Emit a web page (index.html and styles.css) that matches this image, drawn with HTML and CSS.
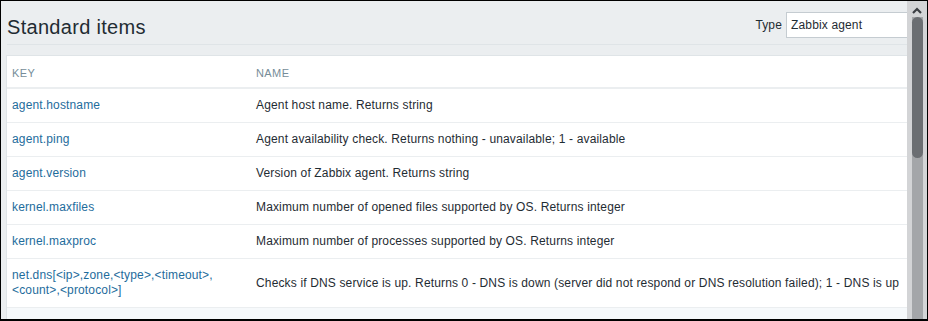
FILE: index.html
```html
<!DOCTYPE html>
<html>
<head>
<meta charset="utf-8">
<link rel="stylesheet" href="styles.css">
</head>
<body>
<div class="frame">
  <div class="page">
    <div class="header">
      <h1 class="title">Standard items</h1>
      <div class="filter">
        <span class="filter-label">Type</span>
        <div class="select">Zabbix agent</div>
      </div>
    </div>
    <div class="box">
      <table class="items">
        <thead>
          <tr><th class="col-key">Key</th><th>Name</th></tr>
        </thead>
        <tbody>
          <tr><td><a class="link">agent.hostname</a></td><td>Agent host name. Returns string</td></tr>
          <tr><td><a class="link">agent.ping</a></td><td>Agent availability check. Returns nothing - unavailable; 1 - available</td></tr>
          <tr><td><a class="link">agent.version</a></td><td>Version of Zabbix agent. Returns string</td></tr>
          <tr><td><a class="link">kernel.maxfiles</a></td><td>Maximum number of opened files supported by OS. Returns integer</td></tr>
          <tr><td><a class="link">kernel.maxproc</a></td><td>Maximum number of processes supported by OS. Returns integer</td></tr>
          <tr><td><a class="link">net.dns[&lt;ip&gt;,zone,&lt;type&gt;,&lt;timeout&gt;,<br>&lt;count&gt;,&lt;protocol&gt;]</a></td><td>Checks if DNS service is up. Returns 0 - DNS is down (server did not respond or DNS resolution failed); 1 - DNS is up</td></tr>
          <tr class="hover"><td>&nbsp;</td><td>&nbsp;</td></tr>
        </tbody>
      </table>
    </div>
  </div>
  <div class="scrollbar">
    <svg class="arrow" width="20" height="14" viewBox="0 0 20 14"><polyline points="6,10 10,6 14,10" fill="none" stroke="#3c3f44" stroke-width="2.2"/></svg>
    <div class="track">
      <div class="thumb"></div>
    </div>
  </div>
</div>
</body>
</html>
```

FILE: styles.css
```css
* { box-sizing: border-box; }
html, body { margin: 0; padding: 0; background: #000; }
body { font-family: "Liberation Sans", Arial, sans-serif; color: #1f2c33; }

.frame {
  width: 928px;
  height: 321px;
  border: 1px solid #000;
  border-bottom-width: 2px;
  display: flex;
  overflow: hidden;
  background: #ebeef0;
}

.page {
  flex: 1;
  min-width: 0;
  padding-left: 5px;
  overflow: hidden;
  background: #ebeef0;
}

.header {
  display: flex;
  justify-content: space-between;
  align-items: flex-start;
  width: 920px;
  border-bottom: 1px solid #dfe4e7;
  height: 44px;
  margin-left: 1px;
}

.title {
  margin: 14px 0 0 0;
  font-size: 20px;
  line-height: 24px;
  font-weight: normal;
  letter-spacing: 0.3px;
  color: #1f2c33;
}

.filter {
  display: flex;
  align-items: center;
  margin-top: 11px;
  gap: 4px;
}

.filter-label {
  font-size: 12px;
  letter-spacing: 0.15px;
  color: #1f2c33;
}

.select {
  width: 141px;
  height: 26px;
  border: 1px solid #c5ccd1;
  background: #fff;
  font-size: 12px;
  letter-spacing: 0.15px;
  line-height: 24px;
  padding-left: 4px;
  color: #1f2c33;
}

.box {
  margin-top: 10px;
  width: 920px;
  background: #fff;
  border: 1px solid #dfe4e7;
  border-right: none;
}

.items {
  width: 100%;
  border-collapse: collapse;
  font-size: 12px;
  letter-spacing: 0.15px;
}

.items th {
  text-align: left;
  font-weight: normal;
  font-size: 11px;
  letter-spacing: 0.4px;
  text-transform: uppercase;
  color: #768d99;
  line-height: 15px;
  padding: 10px 5px 6px 5px;
  border-bottom: 2px solid #ebeef0;
}

.items .col-key { width: 244px; }

.items td {
  line-height: 15px;
  padding: 9px 5px;
  border-bottom: 1px solid #ebeef0;
  vertical-align: middle;
  white-space: nowrap;
}

.link { color: #1e6c9c; text-decoration: none; }

.items tr.hover td { background: #f6f9fb; border-bottom: none; }

.scrollbar {
  width: 20px;
  flex: none;
  background: #d3d4d6;
  display: flex;
  flex-direction: column;
  align-items: center;
}

.arrow { display: block; margin-top: 2px; }

.track {
  flex: 1;
  width: 11px;
  background: #a4a6a9;
}

.thumb {
  height: 141px;
  background: #6b6e72;
  border-radius: 6px;
}
```
